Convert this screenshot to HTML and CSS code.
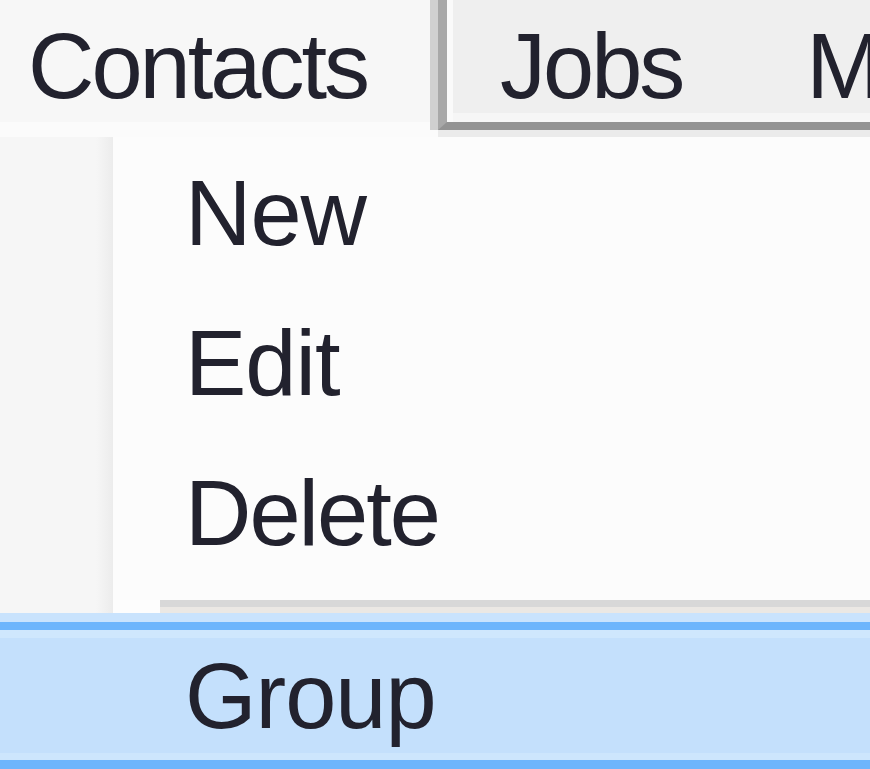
FILE: index.html
```html
<!DOCTYPE html>
<html lang="en">
  <head>
    <meta charset="UTF-8" />
    <meta name="viewport" content="width=device-width, initial-scale=1.0" />
    <title>Contacts menu</title>
    <link rel="stylesheet" href="styles.css">
  </head>
  <body>
    <!-- top menu strip -->
    <div class="menubar">
      <div class="bar-item open">Contacts</div>
      <div class="bar-rest">
        <div class="bar-item jobs">Jobs</div>
        <div class="bar-item">M</div>
      </div>
    </div>

    <!-- dropdown under Contacts -->
    <div class="main">
      <div class="side"></div>
      <div class="dropdown">
        <ul class="items">
          <li>New</li>
          <li>Edit</li>
          <li class="tight">Delete</li>
        </ul>
        <div class="foot">
          <div class="foot-gap"></div>
          <div class="foot-line"></div>
        </div>
      </div>
    </div>

    <!-- highlighted item -->
    <div class="selected">
      <div class="selected-row">Group</div>
    </div>
  </body>
</html>
```

FILE: styles.css
```css
body {
  margin: 0;
  padding: 0;
  width: 870px;
  height: 769px;
  overflow: hidden;
  background-color: #fcfcfc;
  font-family: "Liberation Sans", Arial, sans-serif;
  font-size: 92px;
  color: #22222e;
}

.menubar {
  display: flex;
  align-items: flex-start;
  height: 137px;
  background-color: #fbfbfb;
}

.bar-item {
  height: 103px;
  line-height: 103px;
  padding-top: 15px;
  padding-bottom: 4px;
  letter-spacing: -3px;
  white-space: nowrap;
}

.bar-item.open {
  width: 402px;
  padding-left: 28px;
  background-color: #f7f7f7;
}

.bar-rest {
  flex: 1;
  display: flex;
  gap: 124px;
  margin-left: 8px;
  padding-left: 53px;
  background-color: #efefef;
  border-left: 9px solid #a8a8a8;
  border-bottom: 8px solid #939393;
  box-shadow: -8px 0 0 #d0d0d0, 0 7px 0 #ebebeb, inset 6px 0 0 #fafafa,
    inset 0 -9px 0 #f6f6f6;
  overflow: hidden;
}

.main {
  display: flex;
  height: 476px;
}

.side {
  width: 113px;
  background: linear-gradient(to right, #f6f6f6 85%, #ececec);
}

.dropdown {
  flex: 1;
  display: flex;
  flex-direction: column;
  background-color: #fcfcfc;
}

.items {
  list-style: none;
  margin: 0;
  padding: 1px 0 0 72px;
  height: 462px;
}

.items li {
  height: 150px;
  line-height: 150px;
  letter-spacing: -1px;
}

.items li.tight {
  letter-spacing: -2px;
}

.foot {
  display: flex;
  height: 13px;
}

.foot-gap {
  width: 47px;
  background-color: #fdfdfd;
}

.foot-line {
  flex: 1;
  border-top: 7px solid #d8d8d8;
  background-color: #ebe8e4;
}

.selected {
  padding-top: 9px;
  background-color: #c9e3fd;
}

.selected-row {
  height: 127px;
  line-height: 127px;
  padding: 3px 0 0 185px;
  letter-spacing: -1px;
  background-color: #c4e0fc;
  border-top: 8px solid #6db5fc;
  border-bottom: 9px solid #6db5fc;
  box-shadow: inset 0 8px 0 #cfe7fd, inset 0 -7px 0 #cde6fd;
}
```
